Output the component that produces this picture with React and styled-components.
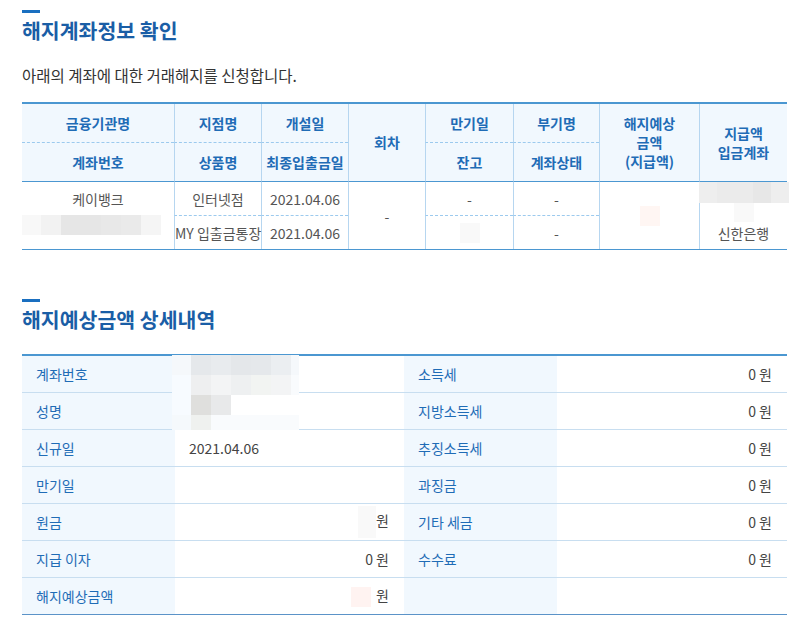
import React from "react";
import styled, { createGlobalStyle } from "styled-components";

const titleBlue = "#1a5ea6";
const headBlue = "#1f6cb6";
const lineBlue = "#4b97d1";
const softLine = "#b6d6f0";
const dashLine = "#9ccaee";
const headBg = "#f1f8fe";
const textGray = "#555555";

const GlobalStyle = createGlobalStyle`
  body {
    margin: 0;
    background: #ffffff;
    font-family: "Noto Sans CJK KR", "Noto Sans", sans-serif;
    color: ${textGray};
  }
`;

const Page = styled.div`
  width: 765px;
  padding: 10px 0 0 22px;
`;

const Section = styled.section`
  & + & {
    margin-top: 49px;
  }
`;

const Title = styled.h2`
  margin: 0;
  font-size: 20.5px;
  line-height: 30px;
  font-weight: 700;
  color: ${titleBlue};
  &:before {
    content: "";
    display: block;
    width: 18px;
    height: 3px;
    margin-bottom: 2px;
    background: #1a6fc0;
  }
`;

const Lead = styled.p`
  margin: 20px 0 17px;
  font-size: 15.5px;
  line-height: 20px;
  color: #333333;
`;

const InfoTable = styled.table`
  width: 765px;
  table-layout: fixed;
  border-collapse: separate;
  border-spacing: 0;
  border-top: 2px solid ${lineBlue};
  border-bottom: 1px solid ${lineBlue};
`;

const Head = styled.th`
  height: ${(p) => (p.rowSpan ? 77 : 38)}px;
  padding: 0 2px;
  background: ${headBg};
  color: ${headBlue};
  font-size: 14px;
  font-weight: 700;
  line-height: 19px;
  text-align: center;
  vertical-align: middle;
  border-left: ${(p) => (p.$first ? "none" : `1px solid ${softLine}`)};
  border-bottom: ${(p) => (p.$dash ? `1px dashed ${dashLine}` : `1px solid ${lineBlue}`)};
`;

const Cell = styled.td`
  height: 33px;
  padding: 0;
  font-size: 14px;
  line-height: 18px;
  color: ${textGray};
  text-align: center;
  vertical-align: ${(p) => (p.$top ? "top" : "middle")};
  white-space: nowrap;
  border-left: ${(p) => (p.$first ? "none" : `1px solid ${softLine}`)};
  border-bottom: ${(p) => (p.$dash ? `1px dashed ${dashLine}` : "none")};
`;

const Stack = styled.div`
  display: flex;
  flex-direction: column;
  align-items: center;
`;

const Bank = styled.div`
  margin-top: 2px;
  font-size: 14px;
  line-height: 18px;
`;

const MosaicGrid = styled.div`
  display: grid;
  grid-template-columns: ${(p) => p.$cols};
  grid-template-rows: ${(p) => p.$rows};
  margin: ${(p) => p.$margin || "0"};
`;

const Tile = styled.div`
  background: ${(p) => p.$c};
`;

const Mosaic = ({ rows, widths, heights, margin }) => (
  <MosaicGrid
    $cols={widths.map((v) => `${v}px`).join(" ")}
    $rows={heights.map((v) => `${v}px`).join(" ")}
    $margin={margin}
  >
    {rows.flat().map((c, i) => (
      <Tile key={i} $c={c} />
    ))}
  </MosaicGrid>
);

const Blot = styled.span`
  display: inline-block;
  vertical-align: middle;
  width: ${(p) => p.$w || 20}px;
  height: ${(p) => p.$h || 20}px;
  margin-right: ${(p) => p.$gap || 0}px;
  background: ${(p) => p.$c};
`;

const DetailTable = styled.table`
  width: 765px;
  margin-top: 20px;
  table-layout: fixed;
  border-collapse: separate;
  border-spacing: 0;
  border-top: 2px solid ${lineBlue};
  border-bottom: 1px solid #5b93c8;
`;

const DetailRow = styled.tr`
  & + & > * {
    border-top: 1px solid #c8def0;
  }
`;

const Label = styled.th`
  height: 36px;
  padding: 0 0 0 14px;
  background: ${headBg};
  color: ${headBlue};
  font-size: 14px;
  font-weight: 400;
  text-align: left;
  vertical-align: middle;
`;

const Value = styled.td`
  position: relative;
  height: 36px;
  padding: 0 15px 0 14px;
  font-size: 14px;
  color: #444444;
  text-align: ${(p) => (p.$right ? "right" : "left")};
  vertical-align: middle;
  white-space: nowrap;
`;

const Overlay = styled.div`
  position: absolute;
  top: -1px;
  left: -3px;
  z-index: 1;
`;

const acctTiles = [
  ["#f8f8f8", "#f2f2f2", "#e6e6e6", "#e6e6e6", "#e8e8e8", "#eaeaea", "#f5f5f5"],
];

const payTiles = [["#eeeeee", "#ebebeb", "#ebebeb", "#e7e7e7", "#eeeeee"]];

const detailTiles = [
  ["#f5f8fb", "#e5e8eb", "#e8ebee", "#e4e7ea", "#e5e8eb", "#ebeef1", "#f5f8fb"],
  ["#f7fbff", "#eeeff0", "#f3f4f5", "#eef0f1", "#f2f4f2", "#f3f4f5", "#f9fbfd"],
  ["#f7fbff", "#dfdfdd", "#e8e9ea", "#ffffff", "#ffffff", "#ffffff", "#ffffff"],
  ["#f5f9fc", "#eff1ef", "#f9fbfd", "#f9fbfd", "#f9fbfd", "#f9fbfd", "#f9fbfd"],
];

const won = "0 원";

const App = () => (
  <Page>
    <GlobalStyle />
    <Section>
      <Title>해지계좌정보 확인</Title>
      <Lead>아래의 계좌에 대한 거래해지를 신청합니다.</Lead>
      <InfoTable>
        <colgroup>
          <col style={{ width: 152 }} />
          <col style={{ width: 87 }} />
          <col style={{ width: 87 }} />
          <col style={{ width: 77 }} />
          <col style={{ width: 88 }} />
          <col style={{ width: 86 }} />
          <col style={{ width: 100 }} />
          <col style={{ width: 88 }} />
        </colgroup>
        <thead>
          <tr>
            <Head $first $dash>금융기관명</Head>
            <Head $dash>지점명</Head>
            <Head $dash>개설일</Head>
            <Head rowSpan={2}>회차</Head>
            <Head $dash>만기일</Head>
            <Head $dash>부기명</Head>
            <Head rowSpan={2}>
              해지예상
              <br />
              금액
              <br />
              (지급액)
            </Head>
            <Head rowSpan={2}>
              지급액
              <br />
              입금계좌
            </Head>
          </tr>
          <tr>
            <Head $first>계좌번호</Head>
            <Head>상품명</Head>
            <Head>최종입출금일</Head>
            <Head>잔고</Head>
            <Head>계좌상태</Head>
          </tr>
        </thead>
        <tbody>
          <tr>
            <Cell $first>케이뱅크</Cell>
            <Cell $dash>인터넷점</Cell>
            <Cell $dash>2021.04.06</Cell>
            <Cell rowSpan={2}>-</Cell>
            <Cell $dash>-</Cell>
            <Cell $dash>-</Cell>
            <Cell rowSpan={2}>
              <Blot $c="#fff6f3" />
            </Cell>
            <Cell rowSpan={2} $top>
              <Stack>
                <Mosaic rows={payTiles} widths={[18, 18, 18, 18, 18]} heights={[21]} />
                <Blot $c="#f9f9f9" $h={19} />
                <Bank>신한은행</Bank>
              </Stack>
            </Cell>
          </tr>
          <tr>
            <Cell $first $top>
              <Mosaic
                rows={acctTiles}
                widths={[19, 20, 20, 20, 20, 20, 20]}
                heights={[20]}
                margin="-1px 0 0 0"
              />
            </Cell>
            <Cell>MY 입출금통장</Cell>
            <Cell>2021.04.06</Cell>
            <Cell>
              <Blot $c="#f9f9f9" />
            </Cell>
            <Cell>-</Cell>
          </tr>
        </tbody>
      </InfoTable>
    </Section>

    <Section>
      <Title>해지예상금액 상세내역</Title>
      <DetailTable>
        <colgroup>
          <col style={{ width: 153 }} />
          <col style={{ width: 229 }} />
          <col style={{ width: 153 }} />
          <col style={{ width: 230 }} />
        </colgroup>
        <tbody>
          <DetailRow>
            <Label>계좌번호</Label>
            <Value>
              <Overlay>
                <Mosaic
                  rows={detailTiles}
                  widths={[19, 20, 20, 20, 20, 20, 8]}
                  heights={[20, 20, 20, 15]}
                />
              </Overlay>
            </Value>
            <Label>소득세</Label>
            <Value $right>{won}</Value>
          </DetailRow>
          <DetailRow>
            <Label>성명</Label>
            <Value />
            <Label>지방소득세</Label>
            <Value $right>{won}</Value>
          </DetailRow>
          <DetailRow>
            <Label>신규일</Label>
            <Value>2021.04.06</Value>
            <Label>추징소득세</Label>
            <Value $right>{won}</Value>
          </DetailRow>
          <DetailRow>
            <Label>만기일</Label>
            <Value />
            <Label>과징금</Label>
            <Value $right>{won}</Value>
          </DetailRow>
          <DetailRow>
            <Label>원금</Label>
            <Value $right>
              <Blot $c="#f9f9f9" $w={18} $h={32} />원
            </Value>
            <Label>기타 세금</Label>
            <Value $right>{won}</Value>
          </DetailRow>
          <DetailRow>
            <Label>지급 이자</Label>
            <Value $right>{won}</Value>
            <Label>수수료</Label>
            <Value $right>{won}</Value>
          </DetailRow>
          <DetailRow>
            <Label>해지예상금액</Label>
            <Value $right>
              <Blot $c="#fff3f1" $gap={5} />원
            </Value>
            <Label />
            <Value />
          </DetailRow>
        </tbody>
      </DetailTable>
    </Section>
  </Page>
);

export default App;
